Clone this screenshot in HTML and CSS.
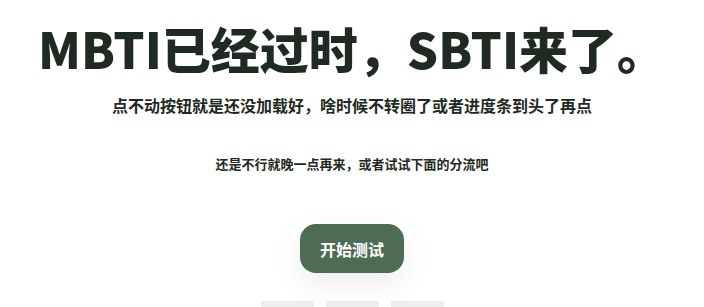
FILE: index.html
```html
<!DOCTYPE html>
<html lang="zh-CN">
<head>
	<meta charset="UTF-8">
	<title>SBTI</title>
	<link rel="stylesheet" href="styles.css">
</head>
<body>
	<div class="page">
		<h1 class="title">MBTI已经过时，SBTI来了。</h1>
		<p class="tip">点不动按钮就是还没加载好，啥时候不转圈了或者进度条到头了再点</p>
		<p class="sub">还是不行就晚一点再来，或者试试下面的分流吧</p>
		<button class="start">开始测试</button>
		<div class="links">
			<a class="link" href="#">分流一</a>
			<a class="link" href="#">分流二</a>
			<a class="link" href="#">分流三</a>
		</div>
	</div>
</body>
</html>
```

FILE: styles.css
```css
*{margin:0;padding:0;box-sizing:border-box;}
body{background-color:#fff;font-family:"Microsoft YaHei","Noto Sans CJK SC",sans-serif;color:#1f2a22;}
.page{display:flex;flex-direction:column;align-items:center;padding-top:16px;}
/*大标题*/
.title{font-size:49px;font-weight:900;line-height:64px;letter-spacing:0;color:#1f2a22;}
.tip{font-size:16px;font-weight:bold;line-height:24px;margin-top:13px;color:#1f2a22;}
.sub{font-size:13px;font-weight:bold;line-height:20px;margin-top:37px;color:#1f2a22;}
.start{margin-top:50px;width:104px;height:49px;border:none;border-radius:16px;background-color:#4e6b54;color:#fff;font-family:inherit;font-size:16px;font-weight:bold;box-shadow:0 10px 30px rgba(0,0,0,0.08);cursor:pointer;}
.links{display:flex;gap:12px;margin-top:28px;}
.link{display:block;width:53px;height:26px;background-color:#eee;color:#1f2a22;font-size:11px;line-height:26px;text-align:center;text-decoration:none;}
```
